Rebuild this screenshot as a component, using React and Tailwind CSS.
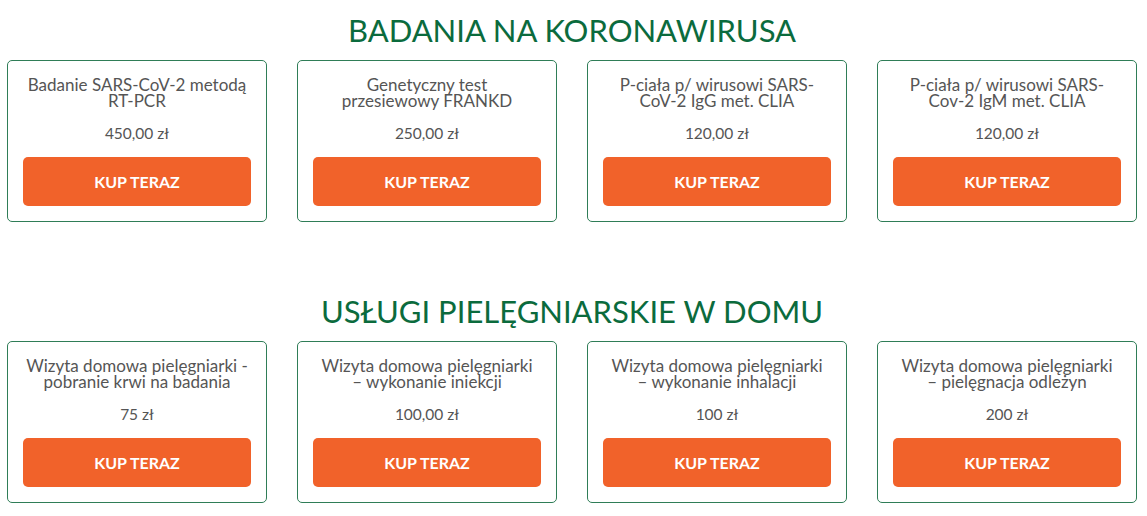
import React from "react";

const sections = [
  {
    title: "BADANIA NA KORONAWIRUSA",
    items: [
      { name: ["Badanie SARS-CoV-2 metodą", "RT-PCR"], price: "450,00 zł" },
      { name: ["Genetyczny test", "przesiewowy FRANKD"], price: "250,00 zł" },
      { name: ["P-ciała p/ wirusowi SARS-", "CoV-2 IgG met. CLIA"], price: "120,00 zł" },
      { name: ["P-ciała p/ wirusowi SARS-", "Cov-2 IgM met. CLIA"], price: "120,00 zł" },
    ],
  },
  {
    title: "USŁUGI PIELĘGNIARSKIE W DOMU",
    items: [
      { name: ["Wizyta domowa pielęgniarki -", "pobranie krwi na badania"], price: "75 zł" },
      { name: ["Wizyta domowa pielęgniarki", "– wykonanie iniekcji"], price: "100,00 zł" },
      { name: ["Wizyta domowa pielęgniarki", "– wykonanie inhalacji"], price: "100 zł" },
      { name: ["Wizyta domowa pielęgniarki", "– pielęgnacja odleżyn"], price: "200 zł" },
    ],
  },
];

function Card({ name, price }) {
  return (
    <div className="flex flex-col rounded-[5px] border border-[#2f7d57] bg-white px-[15px] pt-[16px] pb-[15px]">
      <div className="text-center text-[17px] leading-[16px] text-[#555555] whitespace-nowrap">
        {name.map((l) => (
          <span key={l} className="block">{l}</span>
        ))}
      </div>
      <div className="mt-[15px] text-center text-[15.5px] leading-[18px] text-[#555555]">{price}</div>
      <button className="mt-[15px] h-[49px] w-full rounded-[5px] bg-[#f1622a] text-[16px] font-bold text-white">
        KUP TERAZ
      </button>
    </div>
  );
}

export default function App() {
  return (
    <div
      className="h-[516px] w-[1147px] bg-white pt-[12px] pl-[7px]"
      style={{ fontFamily: "Lato, 'Noto Sans', sans-serif" }}
    >
      {sections.map((s, i) => (
        <section key={s.title} className={i > 0 ? "mt-[71px] w-[1130px]" : "w-[1130px]"}>
          <h2 className="text-center text-[31px] leading-[36px] font-normal text-[#0b6b3d]">{s.title}</h2>
          <div className="mt-[12px] grid grid-cols-4 gap-[30px]">
            {s.items.map((it) => (
              <Card key={it.name.join(" ")} {...it} />
            ))}
          </div>
        </section>
      ))}
    </div>
  );
}
